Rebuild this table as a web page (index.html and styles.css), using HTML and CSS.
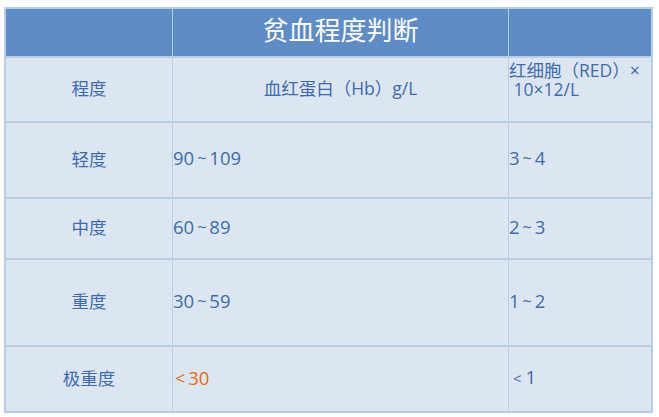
FILE: index.html
```html
<!DOCTYPE html>
<html lang="zh-CN">
<head>
<meta charset="utf-8">
<title>贫血程度判断</title>
<link rel="stylesheet" href="styles.css">
</head>
<body>
<table class="anemia">
  <colgroup>
    <col class="c1"><col class="c2"><col class="c3">
  </colgroup>
  <thead>
    <tr class="r-head">
      <th></th>
      <th class="title">贫血程度判断</th>
      <th></th>
    </tr>
  </thead>
  <tbody>
    <tr class="r1">
      <td class="grade">程度</td>
      <td class="center">血红蛋白（Hb）g/L</td>
      <td class="top"><span class="nw">红细胞（RED）×</span><br>&nbsp;10×12/L</td>
    </tr>
    <tr class="r2">
      <td class="grade">轻度</td>
      <td class="num">90<span class="tl">~</span>109</td>
      <td class="num">3<span class="tl">~</span>4</td>
    </tr>
    <tr class="r3">
      <td class="grade">中度</td>
      <td class="num">60<span class="tl">~</span>89</td>
      <td class="num">2<span class="tl">~</span>3</td>
    </tr>
    <tr class="r4">
      <td class="grade">重度</td>
      <td class="num">30<span class="tl">~</span>59</td>
      <td class="num">1<span class="tl">~</span>2</td>
    </tr>
    <tr class="r5">
      <td class="grade">极重度</td>
      <td class="num warn"><span class="lt">&lt;</span>30</td>
      <td class="num"><span class="lt small">&lt;</span>1</td>
    </tr>
  </tbody>
</table>
</body>
</html>
```

FILE: styles.css
```css
html, body {
  margin: 0;
  padding: 0;
  background: #ffffff;
}

body {
  font-family: "Open Sans", "Noto Sans CJK SC", sans-serif;
}

.anemia {
  margin: 7px 0 0 4px;
  width: 649px;
  table-layout: fixed;
  border-collapse: separate;
  border-spacing: 1px 2px;
  padding: 0 1px;
  background: #b9cde5;
}

.c1 { width: 166px; }
.c2 { width: 335px; }
.c3 { width: 142px; }

.anemia th,
.anemia td {
  padding: 0 0 3px 0;
  vertical-align: middle;
  text-align: left;
  white-space: nowrap;
  overflow: visible;
}

.anemia th {
  background: #5e8cc4;
  color: #ffffff;
  font-weight: normal;
}

.anemia td {
  background: #dce6f1;
  color: #3d6bae;
  font-size: 17.5px;
  line-height: 18px;
}

.anemia td.num {
  font-size: 18.5px;
}

.anemia th.title {
  text-align: center;
  font-size: 26px;
  line-height: 30px;
  padding-bottom: 5px;
}

.r-head { height: 47px; }
.r1 { height: 63px; }
.r2 { height: 74px; }
.r3 { height: 59px; }
.r4 { height: 85px; }
.r5 { height: 64px; }

.anemia td.grade,
.anemia td.center {
  text-align: center;
}

.anemia td.top {
  vertical-align: top;
  padding-top: 3px;
  padding-bottom: 0;
  line-height: 19px;
}

.anemia td.warn {
  color: #e36c09;
}

.tl {
  display: inline-block;
  font-size: 16px;
  margin: 0 3px;
  position: relative;
  top: -1px;
}

.lt {
  display: inline-block;
  font-size: 18px;
  margin: 0 3px 0 2px;
}

.lt.small {
  font-size: 15px;
  margin: 0 4px 0 4px;
}
```
